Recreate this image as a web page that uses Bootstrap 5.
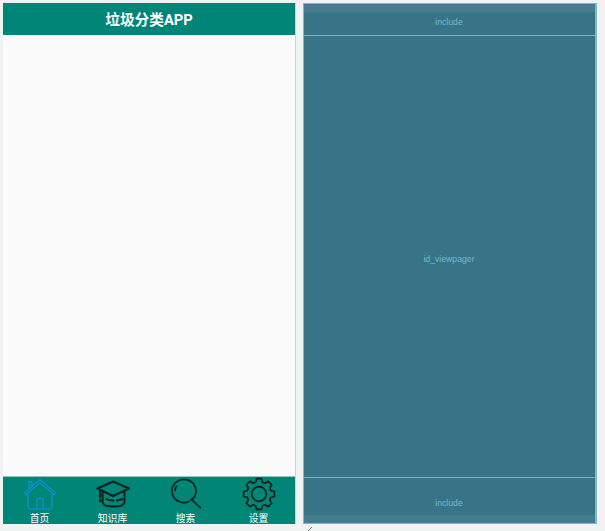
<!DOCTYPE html>
<html lang="zh-CN">
<head>
<meta charset="utf-8">
<meta name="viewport" content="width=device-width, initial-scale=1">
<title>垃圾分类APP</title>
<link href="https://cdn.jsdelivr.net/npm/bootstrap@5.3.0/dist/css/bootstrap.min.css" rel="stylesheet">
<style>
body{background:#f1f2f2;font-family:Roboto,"Noto Sans CJK SC",sans-serif;height:531px;overflow:hidden}
.workspace{padding:3px 8px 0 3px;gap:7px}
.screen{height:521px}
.preview{width:293px;background:#fafafa;border-right:1px solid #b5dcd8}
.title-bar{height:32px;background:#008577;font-size:14.7px;line-height:34px}
.tab-bar{height:48px;background:#008577;border-top:1px solid #8fc9c2}
.tab-item{font-size:9.8px;line-height:12px}
.tab-item svg{width:34px;height:34px;flex-shrink:0;fill:none;stroke:#06201d;stroke-width:1.7;stroke-linejoin:round;stroke-linecap:round}
.tab-item.active svg{stroke:#0c8fc4;stroke-width:1.5}
.tab-item span{margin-top:2px}
.blueprint{width:294px;background:#387387;border:1px solid #7bb9c8;border-right-width:2px;color:#72bccb;font-family:"Liberation Sans",sans-serif;font-size:8.7px;line-height:12px}
.blueprint span{margin-right:1px}
.bp-top{height:32px;border-bottom:1px solid #71b5c4;background:linear-gradient(#457d90 0 8px,#387387 9px);padding-top:5px}
.bp-middle{padding-top:5px}
.bp-bottom{height:46px;border-top:1px solid #71b5c4;background:linear-gradient(#387387 0 36px,#457d90 38px);padding-top:5px}
.resize-mark{width:5px;height:5px;margin-left:308px;margin-top:2px}
</style>
<script src="https://cdn.jsdelivr.net/npm/bootstrap@5.3.0/dist/js/bootstrap.bundle.min.js"></script>
</head>
<body>
<main class="workspace d-flex">
  <section class="screen preview d-flex flex-column">
    <header class="title-bar text-white text-center fw-bold">垃圾分类APP</header>
    <div class="flex-grow-1"></div>
    <nav class="tab-bar d-flex text-white">
      <div class="tab-item active d-flex flex-column align-items-center col-3">
        <svg viewBox="0 0 34 34"><path d="M5 15.500V28.500q0 3.500 3.500 3.500h17q3.500 0 3.500-3.500V15.500M17 2.500 2 15.500q-.8 1.800 1.200 2L17 5.800l13.800 11.700q2-.2 1.200-2ZM6 12V4.500h3V9.500M14 32v-8.500q0-2 2-2h2q2 0 2 2V32"/></svg>
        <span>首页</span>
      </div>
      <div class="tab-item d-flex flex-column align-items-center col-3">
        <svg viewBox="0 0 34 34"><path stroke-width="2" d="M17 4.500 1.500 11.500 17 19 33 11.500ZM6.500 14.500V25q0 4.500 11 4.500t11-4.500V14.500M4 13V20M4 22.500v1.500M10.500 22q2.500 1.500 7 1.500M21 23.500l5-1.200"/></svg>
        <span>知识库</span>
      </div>
      <div class="tab-item d-flex flex-column align-items-center col-3">
        <svg viewBox="0 0 34 34"><path d="M20 24.500A12 11.600 0 1 1 24.500 21L22 22.800M22.500 22.500 31.200 30.700"/><path d="M6 13.500q.2-2.800 1.600-4"/></svg>
        <span>搜索</span>
      </div>
      <div class="tab-item d-flex flex-column align-items-center col-3">
        <svg viewBox="-17 -17 34 34"><path d="M-3.400-11.800-2.500-15.400H2.500L3.400-11.800 5.940-10.750 9.120-12.660 12.660-9.120 10.750-5.940 11.800-3.400 15.400-2.500V2.500L11.800 3.400 10.750 5.940 12.660 9.120 9.120 12.660 5.940 10.750 3.400 11.800 2.500 15.400H-2.500L-3.400 11.800-5.940 10.750-9.120 12.660-12.660 9.120-10.750 5.940-11.800 3.400-15.400 2.500V-2.500L-11.800-3.400-10.750-5.940-12.660-9.120-9.120-12.660-5.940-10.750Z"/><circle r="7.300"/></svg>
        <span>设置</span>
      </div>
    </nav>
  </section>
  <section class="screen blueprint d-flex flex-column">
    <div class="bp-top d-flex align-items-center justify-content-center"><span>include</span></div>
    <div class="bp-middle flex-grow-1 d-flex align-items-center justify-content-center"><span>id_viewpager</span></div>
    <div class="bp-bottom d-flex align-items-center justify-content-center"><span>include</span></div>
  </section>
</main>
<svg class="resize-mark d-block" viewBox="0 0 5 5"><path d="M0 5 4 1" stroke="#777" fill="none"/></svg>
</body>
</html>
